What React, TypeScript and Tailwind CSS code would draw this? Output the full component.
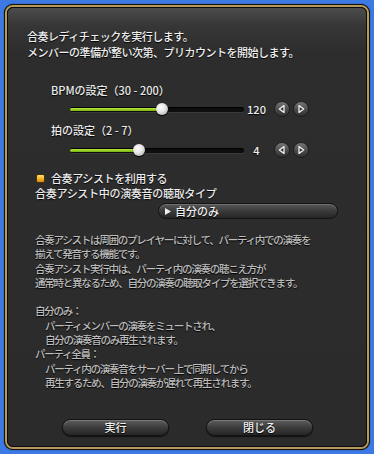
import React from "react";

const font = { fontFamily: '"Noto Sans CJK JP", "Noto Sans", sans-serif' };

function Slider({ pos }: { pos: number }) {
  return (
    <div className="relative w-[174px] h-[5px] rounded-full bg-[#0e0e0e] shadow-[inset_0_1px_1px_#000,0_1px_0_#3a3a3a]">
      <div
        className="absolute left-0 top-[1px] h-[3px] rounded-full bg-gradient-to-b from-[#b8e83a] to-[#78b010]"
        style={{ width: pos }}
      />
      <div
        className="absolute top-[-3.5px] w-[12px] h-[12px] rounded-full bg-[radial-gradient(circle_at_40%_35%,#ffffff_0%,#e4e4e4_45%,#9a9a9a_100%)] shadow-[0_1px_1px_#000]"
        style={{ left: pos - 6 }}
      />
    </div>
  );
}

function ArrowBtn({ dir }: { dir: "l" | "r" }) {
  return (
    <svg width="16" height="16" viewBox="0 0 16 16">
      <defs>
        <linearGradient id={`g${dir}`} x1="0" y1="0" x2="0" y2="1">
          <stop offset="0" stopColor="#7a7a7a" />
          <stop offset="0.5" stopColor="#4e4e4e" />
          <stop offset="1" stopColor="#2e2e2e" />
        </linearGradient>
      </defs>
      <circle cx="8" cy="8" r="7.5" fill={`url(#g${dir})`} stroke="#181818" strokeWidth="0.8" />
      {dir === "l" ? (
        <polygon points="5.3,8 10,4.6 10,11.4" fill="#303030" stroke="#f0f0f0" strokeWidth="1.3" strokeLinejoin="round" />
      ) : (
        <polygon points="10.7,8 6,4.6 6,11.4" fill="#303030" stroke="#f0f0f0" strokeWidth="1.3" strokeLinejoin="round" />
      )}
    </svg>
  );
}

function SliderRow({ pos, value }: { pos: number; value: string }) {
  return (
    <div className="flex items-center h-[16px] ml-[62px]">
      <Slider pos={pos} />
      <div className="w-[21px] ml-[2px] text-center text-[11px] text-[#f0f0f0] font-medium leading-[16px]">{value}</div>
      <div className="ml-[7px] flex gap-[3px]">
        <ArrowBtn dir="l" />
        <ArrowBtn dir="r" />
      </div>
    </div>
  );
}

function PillButton({ label }: { label: string }) {
  return (
    <div className="w-[107px] h-[17px] rounded-full border border-[#121212] bg-gradient-to-b from-[#5e5e5e] via-[#3c3c3c] to-[#262626] shadow-[inset_0_1px_0_#7a7a7a,0_1px_1px_#111] flex items-center justify-center text-[11px] text-[#f2f2f2] font-medium leading-none">
      {label}
    </div>
  );
}

export default function App() {
  const ts = "[text-shadow:0_1px_1px_#000]";
  return (
    <div className="w-[374px] h-[454px] bg-[#3c79e3] p-[4px]" style={font}>
      <div className="w-[366px] h-[446px] rounded-[9px] bg-[#1a1408] p-[1px] shadow-[0_0_1px_#000]">
        <div className="w-full h-full rounded-[8px] border-2 border-[#b49a5c] bg-[#120e08]">
          <div className={`w-full h-full rounded-[6px] border border-[#0c0c0c] bg-[linear-gradient(to_bottom,#4c4c4c_0px,#363636_18px,#2d2d2d_45px,#2b2b2b_100%)] flex flex-col ${ts}`}>
            <div className="ml-[19px] mt-[20px] text-[11px] leading-[16px] tracking-[-0.5px] text-[#f0f0f0] font-medium">
              <div>合奏レディチェックを実行します。</div>
              <div>メンバーの準備が整い次第、プリカウントを開始します。</div>
            </div>

            <div className="ml-[43px] mt-[22px] h-[16px] text-[11px] leading-[16px] text-[#ececec] font-medium">
              BPMの設定（30 - 200）
            </div>
            <div className="mt-[3px]">
              <SliderRow pos={92} value="120" />
            </div>
            <div className="ml-[43px] mt-[5px] h-[16px] text-[11px] leading-[16px] text-[#ececec] font-medium">
              拍の設定（2 - 7）
            </div>
            <div className="mt-[4px]">
              <SliderRow pos={69} value="4" />
            </div>

            <div className="mt-[13px] ml-[28px] h-[15px] flex items-center text-[11px] leading-[15px] text-[#ececec] font-medium tracking-[-0.4px]">
              <div className="w-[9px] h-[9px] rounded-[2px] border border-[#4a3208] bg-gradient-to-b from-[#ffe070] via-[#f5b42a] to-[#d88a10] shadow-[inset_0_0_1px_#fff3]" />
              <span className="ml-[6px]">合奏アシストを利用する</span>
            </div>
            <div className="ml-[27px] h-[15px] text-[11px] leading-[15px] text-[#ececec] font-medium tracking-[-0.3px]">
              合奏アシスト中の演奏音の聴取タイプ
            </div>

            <div className="mt-[2px] ml-[150px] w-[180px] h-[16px] rounded-full border border-[#121212] bg-gradient-to-b from-[#585858] via-[#3a3a3a] to-[#262626] shadow-[inset_0_1px_0_#707070] flex items-center">
              <svg width="6" height="7" viewBox="0 0 6 7" className="ml-[6px]">
                <polygon points="0,0 6,3.5 0,7" fill="#f0f0f0" />
              </svg>
              <span className="ml-[4px] text-[11px] leading-none text-[#f0f0f0] font-medium">自分のみ</span>
            </div>

            <div className="mt-[14px] ml-[27px] text-[10.5px] leading-[14.3px] tracking-[-1.25px] text-[#bcbcbc] font-medium">
              <div>合奏アシストは周囲のプレイヤーに対して、パーティ内での演奏を</div>
              <div>揃えて発音する機能です。</div>
              <div>合奏アシスト実行中は、パーティ内の演奏の聴こえ方が</div>
              <div>通常時と異なるため、自分の演奏の聴取タイプを選択できます。</div>
              <div className="h-[14.3px]" />
              <div>自分のみ：</div>
              <div className="pl-[10px]">パーティメンバーの演奏をミュートされ、</div>
              <div className="pl-[10px]">自分の演奏音のみ再生されます。</div>
              <div>パーティ全員：</div>
              <div className="pl-[10px]">パーティ内の演奏音をサーバー上で同期してから</div>
              <div className="pl-[10px]">再生するため、自分の演奏が遅れて再生されます。</div>
            </div>

            <div className="mt-auto mb-[10px] ml-[54px] flex gap-[37px]">
              <PillButton label="実行" />
              <PillButton label="閉じる" />
            </div>
          </div>
        </div>
      </div>
    </div>
  );
}
